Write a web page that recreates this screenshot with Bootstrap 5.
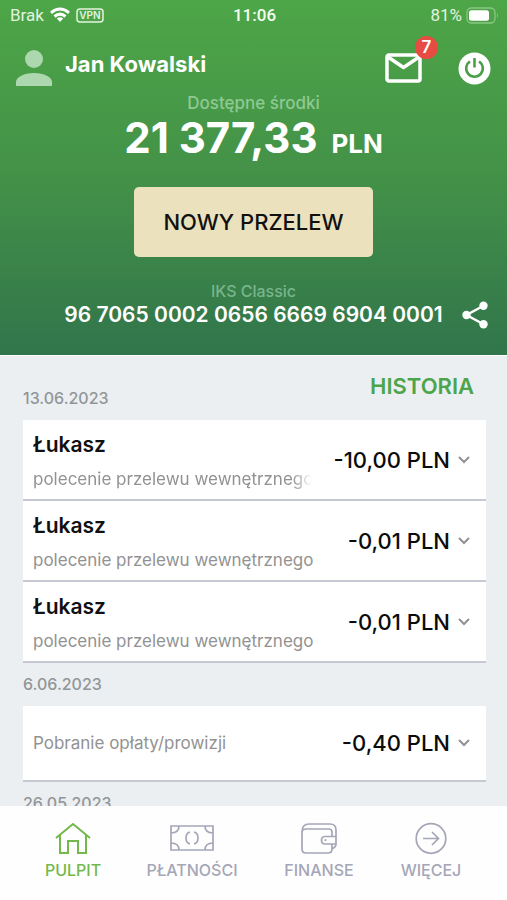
<!DOCTYPE html>
<html lang="pl">
<head>
<meta charset="utf-8">
<meta name="viewport" content="width=device-width, initial-scale=1">
<title>Pulpit</title>
<link href="https://cdn.jsdelivr.net/npm/bootstrap@5.3.0/dist/css/bootstrap.min.css" rel="stylesheet">
<style>
body { font-family: Inter, "Open Sans", sans-serif; background: #ebeff2; color: #111; }
svg { display: block; flex: none; }
.top-panel { background: linear-gradient(#4da647, #439148 50%, #31754b); color: #fff; height: 356px; border-bottom: 1px solid #fff; }
.status-bar { display: grid; grid-template-columns: 1fr auto 1fr; height: 30px; padding: 0 8px 0 10px; font: 400 17px/30px Roboto, sans-serif; color: #e2f3e0; }
.status-bar time { font-weight: 500; font-size: 17px; color: #f4fff2; }
.status-left { gap: 6px; }
.user-row { height: 60px; padding: 0 16px 0 16px; }
.user-name { font-size: 22px; line-height: 28px; font-weight: 700; margin: 8px 0 0 13px; }
.bare { background: none; border: 0; padding: 0; color: inherit; }
.msg-badge { position: absolute; top: -17px; right: -4px; width: 23px; height: 23px; border-radius: 50%; background: #e64c42; font-size: 17px; line-height: 23px; font-weight: 600; text-align: center; }
.caption { font-size: 17px; line-height: 20px; font-weight: 500; color: #8fc994; }
.caption-top { margin-top: 3px; }
.caption-low { font-size: 16px; color: #7ab58c; }
.balance { font-size: 42px; line-height: 50px; font-weight: 700; }
.balance small { font-size: 26px; font-weight: 700; margin-left: 4px; }
.btn-transfer { width: 47%; height: 70px; margin-top: 18px; background: #ebe1bd; border-radius: 5px; color: #111; font-size: 22px; font-weight: 500; padding: 0; }
.btn-transfer:hover { background: #e4d8ae; }
.account-row { display: grid; grid-template-columns: 1fr auto 1fr; align-items: center; padding: 0 18px; height: 24px; font-size: 21px; line-height: 24px; font-weight: 600; }
.history { padding: 0 21px 0 23px; }
.history-head { padding: 16px 0 12px; }
.day { font-size: 16px; line-height: 20px; font-weight: 500; color: #929597; margin: 0; }
.day-next { margin: 11px 0 12px; }
.history-link { color: #4da54b; font-size: 22px; line-height: 28px; font-weight: 600; text-decoration: none; margin-right: 12px; }
.tx-list { --bs-list-group-border-radius: 0; }
.tx-list .tx { height: 81px; padding: 0 16px 0 10px; border: 0; border-bottom: 2px solid #c6c8d2; background: #fff; color: #929292; }
.tx-list .tx-single { height: 76px; }
.tx-text { padding-top: 2px; }
.tx-name { font-size: 21px; line-height: 28px; font-weight: 600; color: #111; margin-bottom: 8px; }
.tx-note { font-size: 17px; line-height: 24px; white-space: nowrap; }
.tx-faded { -webkit-mask-image: linear-gradient(to left, transparent, #000 20px); mask-image: linear-gradient(to left, transparent, #000 20px); }
.tx-sum { font-size: 22px; line-height: 28px; font-weight: 500; color: #0b0b0b; white-space: nowrap; padding-left: 22px; }
.tab-bar { display: grid; grid-template-columns: 118fr 120fr 134fr 90fr; height: 94px; padding: 15px 31px 0 14px; background: #fefefe; }
.tab-link { color: #a5a6b8; font-size: 16px; line-height: 22px; font-weight: 500; text-decoration: none; }
.tab-link.active { color: #72b84b; }
</style>
</head>
<body>
<div class="d-flex flex-column vh-100 overflow-hidden">
  <header class="top-panel flex-shrink-0">
    <div class="status-bar">
      <div class="status-left d-flex align-items-center">
        <span>Brak</span>
        <svg width="20" height="16" viewBox="0 0 20 16" fill="none" stroke="#fff" stroke-width="3"><path d="M1 5.8Q10-1.8 19 5.8M4.5 9.5Q10 4.8 15.500 9.500"/><path d="M10 15 6.800 11.600Q10 9 13.200 11.600Z" fill="#fff" stroke="none"/></svg>
        <svg width="28" height="15" viewBox="0 0 28 15"><rect x="1" y="1" width="26" height="13" rx="3" fill="none" stroke="#e2f3e0" stroke-width="1.500"/><text x="14" y="11.300" text-anchor="middle" font-family="Inter, sans-serif" font-size="10" font-weight="600" fill="#e2f3e0">VPN</text></svg>
      </div>
      <time>11:06</time>
      <div class="d-flex align-items-center justify-content-end gap-1">
        <span>81%</span>
        <svg width="33" height="17" viewBox="0 0 33 17"><rect x="1" y="1" width="28" height="15" rx="4.500" fill="none" stroke="#8bc686" stroke-width="1.300"/><rect x="3" y="3.300" width="20" height="10.500" rx="2.500" fill="#fff"/><path d="M31 6q2 2.500 0 5z" fill="#8bc686"/></svg>
      </div>
    </div>
    <div class="user-row d-flex align-items-center">
      <svg class="mt-3" width="36" height="36" viewBox="0 0 36 36" fill="#add8af"><circle cx="18" cy="9" r="9"/><path d="M0 36v-4C0 27 8 23 18 23s18 4 18 9v4z"/></svg>
      <h1 class="user-name">Jan Kowalski</h1>
      <div class="d-flex align-items-center ms-auto mt-3">
        <button type="button" class="bare position-relative me-4" aria-label="Wiadomości">
          <svg width="49" height="30" viewBox="0 0 49 30" fill="none" stroke="#fff" stroke-width="3.500" stroke-linejoin="round"><rect x="2" y="2" width="33" height="26" rx="2"/><path d="m3 4 15.500 10.500L34 4"/></svg>
          <span class="msg-badge">7</span>
        </button>
        <button type="button" class="bare" aria-label="Wyloguj">
          <svg width="33" height="33" viewBox="0 0 33 33"><circle cx="16.500" cy="16.500" r="16" fill="#fff"/><path d="M12 9.500A8.300 8.300 0 1 0 21 9.500M16.500 6V15.500" fill="none" stroke="#4a9f48" stroke-width="2.600"/></svg>
        </button>
      </div>
    </div>
    <div class="text-center">
      <div class="caption caption-top">Dostępne środki</div>
      <div class="balance">21 377,33 <small>PLN</small></div>
      <button type="button" class="btn btn-transfer">NOWY PRZELEW</button>
      <div class="caption caption-low mt-4">IKS Classic</div>
    </div>
    <div class="account-row">
      <span></span>
      <span>96 7065 0002 0656 6669 6904 0001</span>
      <button type="button" class="bare ms-auto" aria-label="Udostępnij">
        <svg width="27" height="28" viewBox="0 0 27 28" fill="#fff"><path d="m22 4.500-17.500 9.500L22 23.500" fill="none" stroke="#fff" stroke-width="2.500"/><circle cx="4.500" cy="14" r="4.200"/><circle cx="21.500" cy="4.800" r="4.200"/><circle cx="21.500" cy="23.200" r="4.200"/></svg>
      </button>
    </div>
  </header>

  <main class="history flex-fill overflow-hidden">
    <div class="history-head d-flex justify-content-between">
      <h2 class="day mt-3">13.06.2023</h2>
      <a class="history-link" href="#">HISTORIA</a>
    </div>
    <div class="list-group tx-list">
      <button type="button" class="tx list-group-item list-group-item-action d-flex align-items-center">
        <span class="tx-text flex-fill overflow-hidden"><span class="tx-name d-block">Łukasz</span><span class="tx-note tx-faded d-block">polecenie przelewu wewnętrznego</span></span>
        <span class="tx-sum">-10,00 PLN</span>
        <svg class="ms-2" width="12" height="8" viewBox="0 0 12 8" fill="none" stroke="#929292" stroke-width="2"><path d="m1 1 5 5 5-5"/></svg>
      </button>
      <button type="button" class="tx list-group-item list-group-item-action d-flex align-items-center">
        <span class="tx-text flex-fill overflow-hidden"><span class="tx-name d-block">Łukasz</span><span class="tx-note d-block">polecenie przelewu wewnętrznego</span></span>
        <span class="tx-sum">-0,01 PLN</span>
        <svg class="ms-2" width="12" height="8" viewBox="0 0 12 8" fill="none" stroke="#929292" stroke-width="2"><path d="m1 1 5 5 5-5"/></svg>
      </button>
      <button type="button" class="tx list-group-item list-group-item-action d-flex align-items-center">
        <span class="tx-text flex-fill overflow-hidden"><span class="tx-name d-block">Łukasz</span><span class="tx-note d-block">polecenie przelewu wewnętrznego</span></span>
        <span class="tx-sum">-0,01 PLN</span>
        <svg class="ms-2" width="12" height="8" viewBox="0 0 12 8" fill="none" stroke="#929292" stroke-width="2"><path d="m1 1 5 5 5-5"/></svg>
      </button>
    </div>
    <h2 class="day day-next">6.06.2023</h2>
    <div class="list-group tx-list">
      <button type="button" class="tx tx-single list-group-item list-group-item-action d-flex align-items-center">
        <span class="tx-note flex-fill">Pobranie opłaty/prowizji</span>
        <span class="tx-sum">-0,40 PLN</span>
        <svg class="ms-2" width="12" height="8" viewBox="0 0 12 8" fill="none" stroke="#929292" stroke-width="2"><path d="m1 1 5 5 5-5"/></svg>
      </button>
    </div>
    <h2 class="day day-next">26.05.2023</h2>
  </main>

  <nav class="tab-bar flex-shrink-0" aria-label="Menu główne">
    <a class="tab-link active d-flex flex-column align-items-center gap-1" href="#" aria-current="page">
      <svg width="38" height="34" viewBox="0 0 38 34" fill="none" stroke="currentColor" stroke-width="2"><path d="M2 17 19 3l17 14M6 14.500V32h8V20h10v12h8V14.500"/></svg>
      <span>PULPIT</span>
    </a>
    <a class="tab-link d-flex flex-column align-items-center gap-1" href="#">
      <svg width="44" height="34" viewBox="0 0 44 34" fill="none" stroke="currentColor" stroke-width="1.700"><path d="M1 5h42v24H1zM9 5q0 7-8 7M35 5q0 7 8 7M1 22q8 0 8 7M43 22q-8 0-8 7M20 11q-4 1-4 6t4 6M24 11q4 1 4 6t-4 6"/></svg>
      <span>PŁATNOŚCI</span>
    </a>
    <a class="tab-link d-flex flex-column align-items-center gap-1" href="#">
      <svg width="36" height="34" viewBox="0 0 36 34" fill="none" stroke="currentColor" stroke-width="1.700"><path d="M1 11Q1 3 8 3h21q6 0 6 6v14q0 3-4 5M31 15v-4q0-3-3-3H5Q1 8 1 12v16q0 4 4 4h22q4 0 4-4v-5M35 15.500H24q-3.500 0-3.500 3.700t3.500 3.800h11M23.500 19.200h2"/></svg>
      <span>FINANSE</span>
    </a>
    <a class="tab-link d-flex flex-column align-items-center gap-1" href="#">
      <svg width="34" height="34" viewBox="0 0 34 34" fill="none" stroke="currentColor" stroke-width="1.700"><circle cx="17" cy="17.500" r="14.800"/><path d="M9 17.500h15M18 11l6.500 6.500L18 24"/></svg>
      <span>WIĘCEJ</span>
    </a>
  </nav>
</div>
<script src="https://cdn.jsdelivr.net/npm/bootstrap@5.3.0/dist/js/bootstrap.bundle.min.js"></script>
</body>
</html>
